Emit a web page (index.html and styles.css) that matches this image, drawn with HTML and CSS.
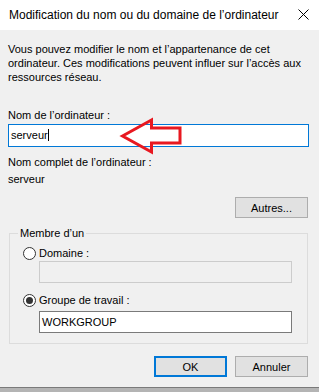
FILE: index.html
```html
<!DOCTYPE html>
<html lang="fr">
<head>
<meta charset="utf-8">
<title>Modification du nom</title>
<link rel="stylesheet" href="styles.css">
</head>
<body>
<div class="dialog">
  <div class="titlebar">
    <span class="title">Modification du nom ou du domaine de l’ordinateur</span>
    <svg class="close" width="11" height="11" viewBox="0 0 11 11"><path d="M0.5 0.5 L10.5 10.5 M10.5 0.5 L0.5 10.5" stroke="#000" stroke-width="1" fill="none"/></svg>
  </div>
  <div class="content">
    <p class="desc">Vous pouvez modifier le nom et l’appartenance de cet<br>ordinateur. Ces modifications peuvent influer sur l’accès aux<br>ressources réseau.</p>
    <div class="label first">Nom de l’ordinateur :</div>
    <div class="field-wrap">
      <div class="input focused"><span class="caret">serveur</span></div>
      <svg class="arrow" width="301" height="23" viewBox="0 0 301 23"><path d="M114.5 12 L143.5 -4 L143.5 4 L172 4 L172 19 L143.5 19 L143.5 28 Z" fill="none" stroke="#e81820" stroke-width="3" stroke-linejoin="miter"/></svg>
    </div>
    <div class="label full">Nom complet de l’ordinateur :</div>
    <div class="label value">serveur</div>
    <div class="row-right"><button class="btn autres">Autres...</button></div>
    <div class="group">
      <span class="legend">Membre d’un</span>
      <div class="radio-row r1"><span class="radio"></span><span>Domaine :</span></div>
      <div class="input disabled sub"></div>
      <div class="radio-row r2"><span class="radio checked"></span><span>Groupe de travail :</span></div>
      <div class="input sub wg">WORKGROUP</div>
    </div>
    <div class="actions">
      <button class="btn ok">OK</button>
      <button class="btn">Annuler</button>
    </div>
  </div>
  <div class="bottom-edge"></div>
</div>
</body>
</html>
```

FILE: styles.css
```css
html, body {
  margin: 0;
  padding: 0;
  background: #f0f0f0;
}
.dialog {
  width: 319px;
  height: 392px;
  display: flex;
  flex-direction: column;
  font-family: "Liberation Sans", Arial, sans-serif;
  font-size: 11px;
  color: #000;
  overflow: hidden;
}
.titlebar {
  height: 30px;
  background: #fff;
  display: flex;
  align-items: center;
  padding-left: 9px;
  padding-right: 10px;
  box-sizing: border-box;
  justify-content: space-between;
}
.title {
  font-size: 12px;
  padding-bottom: 1px;
}
.close {
  display: block;
  margin-bottom: 1px;
}
.content {
  flex: 1;
  background: #f0f0f0;
  padding: 0 10px 0 8px;
}
.desc {
  margin: 12px 0 0 0;
  line-height: 14px;
  white-space: nowrap;
}
.label {
  line-height: 14px;
}
.label.first {
  margin-top: 24px;
}
.field-wrap {
  position: relative;
  margin-top: 2px;
}
.input {
  box-sizing: border-box;
  height: 23px;
  border: 1px solid #7a7a7a;
  background: #fff;
  padding: 0 2px;
  line-height: 21px;
}
.input.focused {
  border-color: #0078d7;
}
.caret {
  border-right: 1px solid #000;
  padding-right: 0;
}
.arrow {
  position: absolute;
  left: 0;
  top: 0;
  overflow: visible;
}
.label.full {
  margin-top: 8px;
}
.label.value {
  margin-top: 3px;
}
.row-right {
  display: flex;
  justify-content: flex-end;
  margin-top: 11px;
  padding-right: 1px;
}
.btn {
  font-family: "Liberation Sans", Arial, sans-serif;
  font-size: 11px;
  color: #000;
  width: 73px;
  height: 21px;
  box-sizing: border-box;
  background: #e1e1e1;
  border: 1px solid #adadad;
  padding: 0;
  margin: 0;
}
.group {
  position: relative;
  margin: 15px 1px 0 1px;
  height: 111px;
  box-sizing: border-box;
  border: 1px solid #dcdcdc;
  padding: 12px 0 0 0;
}
.legend {
  position: absolute;
  left: 8px;
  top: -8px;
  line-height: 14px;
  background: #f0f0f0;
  padding: 0 2px;
}
.radio-row {
  display: flex;
  align-items: center;
  height: 14px;
  margin-left: 13px;
  gap: 3px;
}
.radio {
  width: 13px;
  height: 13px;
  box-sizing: border-box;
  border: 1px solid #333;
  border-radius: 50%;
  background: #fff;
  display: flex;
  align-items: center;
  justify-content: center;
}
.radio.checked::after {
  content: "";
  width: 7px;
  height: 7px;
  border-radius: 50%;
  background: #333;
}
.input.sub {
  margin-left: 29px;
  width: 253px;
  height: 22px;
  line-height: 20px;
}
.input.disabled {
  background: #f0f0f0;
  border-color: #cccccc;
  margin-top: 1px;
}
.radio-row.r2 {
  margin-top: 10px;
}
.input.wg {
  margin-top: 4px;
}
.actions {
  display: flex;
  justify-content: flex-end;
  gap: 8px;
  margin-top: 12px;
  padding-right: 1px;
}
.btn.ok {
  border: 1px solid #0078d7;
  box-shadow: inset 0 0 0 1px #0078d7;
}
.bottom-edge {
  height: 4px;
  border-top: 1px solid #7a7a7a;
  background: #b4b4b4;
}
```
